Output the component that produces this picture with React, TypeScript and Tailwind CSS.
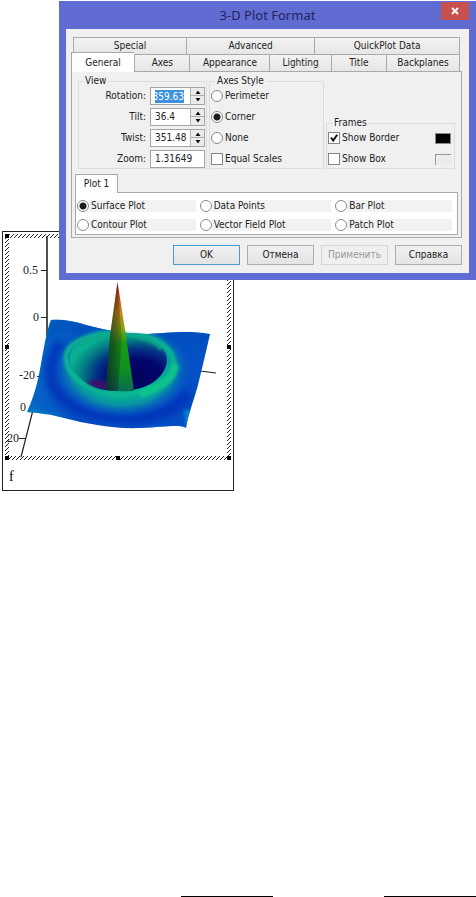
import { useState } from "react"
import clsx from "clsx"

const plotTypes = [
  "Surface Plot",
  "Data Points",
  "Bar Plot",
  "Contour Plot",
  "Vector Field Plot",
  "Patch Plot",
]

const radioClass =
  "appearance-none shrink-0 size-3 rounded-full border border-[#8a8a8a] bg-white checked:bg-[radial-gradient(circle,#1c1c1c_3px,#fff_4px)]"

function Check({ id, label, checked, onChange }: any) {
  return (
    <div className="flex h-[18px] items-center">
      <span className="relative flex">
        <input
          id={id}
          type="checkbox"
          checked={checked}
          onChange={(e) => onChange(e.target.checked)}
          className="size-3 appearance-none border border-[#858585] bg-white"
        />
        {checked && (
          <svg viewBox="0 0 12 12" className="pointer-events-none absolute inset-0 size-3">
            <path d="M3 5.5 L5.2 8.5 L9.2 2.8" fill="none" stroke="#111" strokeWidth="2" />
          </svg>
        )}
      </span>
      <label htmlFor={id} className="pl-0.5 whitespace-nowrap">{label}</label>
    </div>
  )
}

function Field({ id, label, value, onChange, spin, selected }: any) {
  function step(d: number) {
    onChange(String(Math.round((Number(value) + d) * 100) / 100))
  }

  return (
    <div className="flex h-[18px] items-center justify-end gap-1">
      <label htmlFor={id}>{label}</label>
      <div className="flex h-[18px] w-[55px] items-center border border-[#a5a5a5] bg-white pl-1">
        <input
          id={id}
          value={value}
          dir={selected ? "rtl" : "ltr"}
          onChange={(e) => onChange(e.target.value)}
          className={clsx(
            "min-w-0 outline-none",
            selected ? "h-[13px] w-[29px] bg-[#3c92e0] text-white" : "h-3",
            !selected && (spin ? "w-[33px]" : "w-11"),
          )}
        />
        {spin && (
          <div className="ml-auto flex h-full w-[14px] flex-col border-l border-[#b5b5b5] bg-[#ebebeb]">
            <button aria-label={label + " up"} onClick={() => step(1)} className="flex h-2 items-center justify-center border-b border-[#aaa]">
              <svg viewBox="0 0 6 4" className="h-1 w-1.5"><path d="M0.500 4 L3 0.500 L5.500 4Z" fill="#111" /></svg>
            </button>
            <button aria-label={label + " down"} onClick={() => step(-1)} className="flex h-2 items-center justify-center">
              <svg viewBox="0 0 6 4" className="h-1 w-1.5"><path d="M0.500 0 L3 3.500 L5.500 0Z" fill="#111" /></svg>
            </button>
          </div>
        )}
      </div>
    </div>
  )
}

function Tab({ className, children }: any) {
  return (
    <button className={clsx("h-[17px] border-t border-l border-[#a9a9a9] bg-linear-to-b from-[#f2f2f2] to-[#e6e6e6] text-center leading-4", className)}>
      {children}
    </button>
  )
}

function SurfacePlot() {
  const surface =
    "M51 320 C62 319 74 321 86 325 C104 330 124 334 148 334 C168 333 186 330 210 334 C206 352 202 368 198 385 C193 403 188 415 186 428 C180 424 166 427 140 428 C112 429 88 424 64 418 C50 414 38 413 27 412 C36 392 39 376 42 358 C45 342 47 330 51 320Z"

  return (
    <svg viewBox="3 232 230 230" className="block w-full">
      <defs>
        <pattern id="hatch" width="4" height="4" patternUnits="userSpaceOnUse">
          <path d="M-1 5 L5 -1 M-1 1 L1 -1 M3 5 L5 3" stroke="#222" strokeWidth="1" />
        </pattern>
        <clipPath id="sheet"><path d={surface} /></clipPath>
        <filter id="soft1" x="-30%" y="-30%" width="160%" height="160%"><feGaussianBlur stdDeviation="1.5" /></filter>
        <filter id="soft2" x="-30%" y="-30%" width="160%" height="160%"><feGaussianBlur stdDeviation="5" /></filter>
        <linearGradient id="base" x1="0" y1="0" x2="1" y2="0.3">
          <stop offset="0" stopColor="#0878c8" />
          <stop offset="0.5" stopColor="#0450c4" />
          <stop offset="1" stopColor="#0450c4" />
        </linearGradient>
        <radialGradient id="ring" gradientUnits="userSpaceOnUse" cx="0" cy="0" r="1" gradientTransform="translate(122 369) scale(70 50)">
          <stop offset="0" stopColor="#08b494" />
          <stop offset="0.52" stopColor="#08b492" />
          <stop offset="0.72" stopColor="#0894a4" />
          <stop offset="0.88" stopColor="#0664bc" stopOpacity="0.6" />
          <stop offset="1" stopColor="#0450c4" stopOpacity="0" />
        </radialGradient>
        <radialGradient id="hole" gradientUnits="userSpaceOnUse" cx="0" cy="0" r="1" gradientTransform="translate(137 377) scale(68 46)">
          <stop offset="0" stopColor="#02025c" />
          <stop offset="0.38" stopColor="#02066c" />
          <stop offset="0.6" stopColor="#042e84" />
          <stop offset="0.8" stopColor="#047884" />
          <stop offset="1" stopColor="#08b08e" />
        </radialGradient>
        <linearGradient id="peak" x1="0" y1="0" x2="0" y2="1">
          <stop offset="0" stopColor="#a01414" />
          <stop offset="0.12" stopColor="#cc4410" />
          <stop offset="0.28" stopColor="#cc8a14" />
          <stop offset="0.42" stopColor="#8aa010" />
          <stop offset="0.56" stopColor="#1c9c14" />
          <stop offset="0.8" stopColor="#0c9020" />
          <stop offset="1" stopColor="#0a6a54" />
        </linearGradient>
        <linearGradient id="shade" gradientUnits="userSpaceOnUse" x1="107" y1="0" x2="126" y2="0">
          <stop offset="0" stopColor="#0c1c28" stopOpacity="0.7" />
          <stop offset="0.5" stopColor="#0c1c20" stopOpacity="0.4" />
          <stop offset="1" stopColor="#0c1c20" stopOpacity="0" />
        </linearGradient>
      </defs>

      {/* axes */}
      <g stroke="#222" strokeWidth="1.2" fill="none">
        <path d="M47 236 V336" strokeWidth="1.6" />
        <path d="M41 270.500 H47 M41 317.500 H47 M37 376.500 H41 M19 438.500 H26" />
        <path d="M33 410 L21 457 M200 371 L216 373" />
      </g>
      <g fontFamily="'Liberation Serif', serif" fontSize="12" fill="#222" textAnchor="end">
        <text x="38" y="274">0.5</text>
        <text x="39" y="321">0</text>
        <text x="35" y="379">-20</text>
        <text x="26" y="411">0</text>
        <text x="19" y="442">20</text>
      </g>

      {/* sheet with the ring */}
      <g clipPath="url(#sheet)">
        <rect x="20" y="310" width="200" height="125" fill="url(#base)" />
        <g filter="url(#soft2)" fill="none">
          <path d="M62 342 C42 372 50 398 86 411 C130 422 172 420 188 392" stroke="#0030b8" strokeWidth="13" />
          <path d="M72 334 C92 326 140 326 176 344" stroke="#0440bc" strokeWidth="7" />
          <path d="M20 412 L60 424" stroke="#0890c4" strokeWidth="9" />
        </g>
        <path d="M150 430 L190 432 L187 410" fill="none" stroke="#0684d0" strokeWidth="6" filter="url(#soft1)" />
        <ellipse cx="122" cy="369" rx="70" ry="50" fill="url(#ring)" clipPath="inset(0)" />
        <path d="M44 345 C70 318 160 316 196 350 L210 334 L160 320 L51 316Z" fill="#0450bc" opacity="0.75" filter="url(#soft2)" />
        <path d="M66 358 C66 342 92 332 122 333 C152 333 172 346 174 362 C174 378 152 394 120 394 C90 394 67 377 66 358Z" fill="none" stroke="#08b492" strokeWidth="5" filter="url(#soft1)" />
        <path d="M140 394 C162 388 174 378 175 364" fill="none" stroke="#08c28c" strokeWidth="8" filter="url(#soft1)" />
      </g>

      {/* inside of the bowl */}
      <path d="M70 357 C70 344 92 334 120 334 C148 334 167 346 167 360 C166 377 148 391 120 391 C110 391 100 390 92 386 C78 379 70 369 70 357Z" fill="url(#hole)" />
      <path d="M73 349 C84 338 104 335 121 335 C140 335 154 341 162 349" fill="none" stroke="#08a68e" strokeWidth="4" filter="url(#soft1)" />
      <path d="M86 382 C92 386 98 388 106 389 L107 382 L96 380Z" fill="#40106a" filter="url(#soft1)" />

      {/* centre peak */}
      <path d="M117.500 282 L110 336 L106 390 Q120 392 134 391 L126 336Z" fill="url(#peak)" />
      <path d="M117.500 282 L110 336 L106 390 Q112 391 118 391 L122 340Z" fill="url(#shade)" />

      {/* selection frame */}
      <path d="M5 234H231V460H5Z M9 238V456H227V238Z" fill="url(#hatch)" fillRule="evenodd" />
      <g fill="#000">
        <rect x="5" y="234" width="4" height="4" />
        <rect x="5" y="345" width="4" height="4" />
        <rect x="5" y="456" width="4" height="4" />
        <rect x="116" y="456" width="4" height="4" />
        <rect x="227" y="456" width="4" height="4" />
        <rect x="227" y="345" width="4" height="4" />
      </g>
    </svg>
  )
}

export default function App() {
  const [rotation, setRotation] = useState("359.63")
  const [tilt, setTilt] = useState("36.4")
  const [twist, setTwist] = useState("351.48")
  const [zoom, setZoom] = useState("1.31649")
  const [axes, setAxes] = useState("Corner")
  const [equal, setEqual] = useState(false)
  const [border, setBorder] = useState(true)
  const [box, setBox] = useState(false)
  const [plot, setPlot] = useState("Surface Plot")

  const btn = "h-5 w-[67px] border bg-linear-to-b from-[#f0f0f0] to-[#e4e4e4]"

  return (
    <main className="relative flex min-h-screen flex-col bg-white pt-[231px] font-['DejaVu_Sans_Condensed','DejaVu_Sans',sans-serif] text-[10px] leading-3 text-[#222]">

      {/* ================= PLOT REGION ================= */}

      <figure className="ml-0.5 w-[232px] border border-[#222]">
        <SurfacePlot />
        <figcaption className="px-1.5 pt-2 pb-1.5 font-['Liberation_Serif',serif] text-sm leading-[14px] text-black">f</figcaption>
      </figure>

      {/* ================= DIALOG ================= */}

      <section
        role="dialog"
        aria-labelledby="dlg-title"
        className="absolute top-px right-0 left-[59px] bg-[#606cd2] px-[7px] pb-[7px]"
      >
        <header className="flex h-7 items-start">
          <h1 id="dlg-title" className="flex-1 pl-7 text-center font-['Noto_Sans',sans-serif] text-[13px] leading-7 text-[#24245c]">
            3-D Plot Format
          </h1>
          <button aria-label="Close" className="mt-px flex h-[18px] w-7 items-center justify-center bg-[#c75050]">
            <svg viewBox="0 0 8 8" className="size-2"><path d="M1 1 L7 7 M7 1 L1 7" stroke="#fff" strokeWidth="1.8" /></svg>
          </button>
        </header>

        <div className="bg-[#f0f0f0] px-[5px] pt-2 pb-2">

          <div className="mr-1 ml-0.5 flex border-r border-[#a9a9a9]">
            <Tab className="flex-[113]">Special</Tab>
            <Tab className="flex-[128]">Advanced</Tab>
            <Tab className="flex-[145]">QuickPlot Data</Tab>
          </div>
          <div className="mr-1 flex border-r border-[#a9a9a9]">
            <button className="-mt-0.5 -mb-px flex-[63] border-t border-l border-[#a9a9a9] bg-white leading-4">General</button>
            <Tab className="flex-[55]">Axes</Tab>
            <Tab className="flex-[80]">Appearance</Tab>
            <Tab className="flex-[61]">Lighting</Tab>
            <Tab className="flex-[55]">Title</Tab>
            <Tab className="flex-[73]">Backplanes</Tab>
          </div>

          <div className="mr-0.5 border border-[#a9a9a9] px-[3px] pt-[3px] pb-0.5">

            <div className="mx-[3px] flex items-end gap-0.5">

              <fieldset className="w-[129px] border border-[#dcdcdc] pr-px">
                <legend className="ml-1 px-0.5 leading-3">View</legend>
                <div className="flex flex-col gap-[3px]">
                  <Field id="rotation" label="Rotation:" value={rotation} onChange={setRotation} spin selected />
                  <Field id="tilt" label="Tilt:" value={tilt} onChange={setTilt} spin />
                  <Field id="twist" label="Twist:" value={twist} onChange={setTwist} spin />
                  <Field id="zoom" label="Zoom:" value={zoom} onChange={setZoom} />
                </div>
              </fieldset>

              <fieldset className="w-[115px] border border-[#dcdcdc] pl-px">
                <legend className="ml-1 px-0.5 leading-3">Axes Style</legend>
                <div className="flex flex-col gap-[3px]">
                  {["Perimeter", "Corner", "None"].map((name) => (
                    <div key={name} className="flex h-[18px] items-center">
                      <input
                        id={name}
                        type="radio"
                        name="axes"
                        checked={axes === name}
                        onChange={() => setAxes(name)}
                        className={radioClass}
                      />
                      <label htmlFor={name} className="pl-0.5">{name}</label>
                    </div>
                  ))}
                  <Check id="equal" label="Equal Scales" checked={equal} onChange={setEqual} />
                </div>
              </fieldset>

              <fieldset className="min-w-0 flex-1 border border-[#dcdcdc] pr-[3px] pl-px">
                <legend className="ml-1 px-0.5 leading-3">Frames</legend>
                <div className="flex flex-col gap-[3px]">
                  <div className="flex items-center justify-between">
                    <Check id="border" label="Show Border" checked={border} onChange={setBorder} />
                    <button aria-label="Border color" className="h-[11px] w-4 border border-[#888] bg-black" />
                  </div>
                  <div className="flex items-center justify-between">
                    <Check id="box" label="Show Box" checked={box} onChange={setBox} />
                    <button aria-label="Box color" className="h-[11px] w-4 border-t border-l border-[#999] bg-[#ececec]" />
                  </div>
                </div>
              </fieldset>

            </div>

            <button className="relative z-10 mt-[5px] -mb-px block h-[19px] w-[43px] border border-b-0 border-[#a9a9a9] bg-white">
              Plot 1
            </button>
            <div className="grid grid-cols-[123fr_136fr_121fr] border border-[#a9a9a9] bg-white px-px pt-[3px]">
              {plotTypes.map((name) => (
                <div key={name} className="flex h-[19px] items-center pr-1">
                  <input
                    id={name}
                    type="radio"
                    name="plot"
                    checked={plot === name}
                    onChange={() => setPlot(name)}
                    className={radioClass}
                  />
                  <label htmlFor={name} className="flex-1 bg-[#f2f2f2] pl-0.5 whitespace-nowrap">{name}</label>
                </div>
              ))}
            </div>

          </div>

          <div className="mt-[7px] mr-0.5 flex justify-end gap-[7px]">
            <button className={clsx(btn, "border-[#4a9ad4]")}>OK</button>
            <button className={clsx(btn, "border-[#adadad]")}>Отмена</button>
            <button disabled className="h-5 w-[67px] border border-[#d5d5d5] bg-[#efefef] text-[#999]">Применить</button>
            <button className={clsx(btn, "border-[#adadad]")}>Справка</button>
          </div>

        </div>
      </section>

      {/* ================= BOTTOM RULES ================= */}

      <footer className="mt-auto flex justify-end gap-[111px]">
        <hr className="w-[92px] border-black" />
        <hr className="w-[92px] border-black" />
      </footer>

    </main>
  )
}
